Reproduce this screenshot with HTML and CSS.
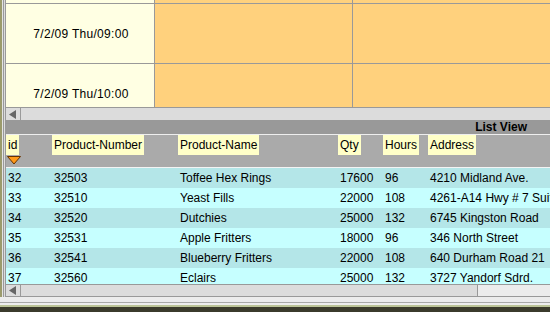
FILE: index.html
```html
<!DOCTYPE html>
<html>
	<head>
		<meta charset="utf-8">
		<title>List View</title>
		<link rel="stylesheet" href="styles.css">
	</head>
	<body>
		<div class="app">
			<div class="calendar">
				<div class="cal-rows">
					<div class="cal-row">
						<div class="cell time"></div>
						<div class="cell slot"></div>
						<div class="cell slot"></div>
					</div>
					<div class="cal-row">
						<div class="cell time">7/2/09 Thu/09:00</div>
						<div class="cell slot"></div>
						<div class="cell slot"></div>
					</div>
					<div class="cal-row">
						<div class="cell time">7/2/09 Thu/10:00</div>
						<div class="cell slot"></div>
						<div class="cell slot"></div>
					</div>
				</div>
			</div>
			<div class="hscroll">
				<div class="arrow">
					<svg width="8" height="9" viewBox="0 0 8 9"><polygon points="7,0 7,9 0,4.5" fill="#666"/></svg>
				</div>
				<div class="track"></div>
			</div>

			<div class="list-title">List View</div>
			<div class="list-head">
				<div class="col"><span class="label">id</span>
					<svg class="sort" width="14" height="9" viewBox="0 0 14 9"><polygon points="0.5,0.5 13.5,0.5 7,8" fill="#ff9a1a" stroke="#663300" stroke-width="1"/></svg>
				</div>
				<div class="col"><span class="label">Product-Number</span></div>
				<div class="col"><span class="label">Product-Name</span></div>
				<div class="col"><span class="label">Qty</span></div>
				<div class="col"><span class="label">Hours</span></div>
				<div class="col"><span class="label">Address</span></div>
			</div>
			<div class="list-body">
				<div class="list-row">
					<span>32</span><span>32503</span><span>Toffee Hex Rings</span><span>17600</span><span>96</span><span>4210 Midland Ave.</span>
				</div>
				<div class="list-row">
					<span>33</span><span>32510</span><span>Yeast Fills</span><span>22000</span><span>108</span><span>4261-A14 Hwy # 7 Suit</span>
				</div>
				<div class="list-row">
					<span>34</span><span>32520</span><span>Dutchies</span><span>25000</span><span>132</span><span>6745 Kingston Road</span>
				</div>
				<div class="list-row">
					<span>35</span><span>32531</span><span>Apple Fritters</span><span>18000</span><span>96</span><span>346 North Street</span>
				</div>
				<div class="list-row">
					<span>36</span><span>32541</span><span>Blueberry Fritters</span><span>22000</span><span>108</span><span>640 Durham Road 21</span>
				</div>
				<div class="list-row">
					<span>37</span><span>32560</span><span>Eclairs</span><span>25000</span><span>132</span><span>3727 Yandorf Sdrd.</span>
				</div>
			</div>
			<div class="hscroll bottom">
				<div class="arrow">
					<svg width="8" height="9" viewBox="0 0 8 9"><polygon points="7,0 7,9 0,4.5" fill="#666"/></svg>
				</div>
				<div class="track">
					<div class="track-fill"></div>
				</div>
			</div>
		</div>
		<div class="frame-bottom"></div>
	</body>
</html>
```

FILE: styles.css
```css
html, body{
	margin: 0;
	padding: 0;
}
body{
	width: 550px;
	height: 312px;
	overflow: hidden;
	background: #9b9b6c;
	font-family: "Liberation Sans", Arial, sans-serif;
	font-size: 12px;
	color: #000;
}
.app{
	margin-left: 2px;
	height: 297px;
	border-left: 1px solid #e4e4e4;
	padding-left: 3px;
	background: linear-gradient(to right, #999 0 1px, #dcdcdc 1px 2px, #999 2px 3px);
	display: flex;
	flex-direction: column;
	overflow: hidden;
}

/* calendar pane */
.calendar{
	height: 107px;
	border-bottom: 1px solid #999;
	overflow: hidden;
	flex: none;
}
.cal-rows{
	margin-top: -56px;
}
.cal-row{
	display: grid;
	grid-template-columns: 149px 198px 1fr;
	height: 60px;
	border-bottom: 1px solid #999;
	box-sizing: border-box;
}
.cell{
	border-right: 1px solid #999;
}
.cell.time{
	background: #ffffe3;
	display: flex;
	align-items: center;
	justify-content: center;
	padding-left: 2px;
	letter-spacing: 0.3px;
}
.cell.slot{
	background: #ffd17d;
}
.cell.slot:last-child{
	border-right: none;
}

/* scroll bars */
.hscroll{
	height: 12px;
	display: flex;
	background: #dcdcdc;
	flex: none;
}
.hscroll .arrow{
	width: 15px;
	box-sizing: border-box;
	border-right: 1px solid #9a9a9a;
	display: flex;
	align-items: center;
	justify-content: center;
}
.hscroll .track{
	flex: 1;
	display: flex;
}
.hscroll.bottom{
	height: 11px;
	border-top: 1px solid #999;
	border-bottom: 1px solid #999;
}
.hscroll.bottom .track{
	background: #ececec;
}
.track-fill{
	width: 456px;
	background: #dcdcdc;
	border-right: 1px solid #999;
}

/* list view */
.list-title{
	height: 14px;
	line-height: 14px;
	background: #999;
	border-bottom: 1px solid #eee;
	text-align: right;
	font-weight: bold;
	font-size: 12px;
	padding-right: 23px;
	flex: none;
}
.list-head, .list-row{
	display: grid;
	grid-template-columns: 46px 126px 160px 45px 45px 1fr;
}
.list-head{
	height: 32px;
	background: #aaa;
	border-bottom: 1px solid #f4f4f4;
	flex: none;
}
.list-head .col{
	display: flex;
	flex-direction: column;
	align-items: flex-start;
}
.label{
	background: #ffffc8;
	height: 20px;
	line-height: 20px;
	padding: 0 2px;
	white-space: nowrap;
}
.sort{
	display: block;
	margin: 1px 0 0 1px;
}
.list-body{
	flex: 1;
	overflow: hidden;
}
.list-row{
	height: 20px;
	line-height: 20px;
	background: #b4e6e8;
}
.list-row:nth-child(even){
	background: #c6ffff;
}
.list-row span{
	padding-left: 2px;
	white-space: nowrap;
	overflow: hidden;
}

.frame-bottom{
	height: 15px;
	background: linear-gradient(to bottom, #ececec 0 5px, #a8a8a8 5px 6px, #eeeeee 6px 8px, #bcc497 8px 10px, #3b3b2c 10px);
}
```
